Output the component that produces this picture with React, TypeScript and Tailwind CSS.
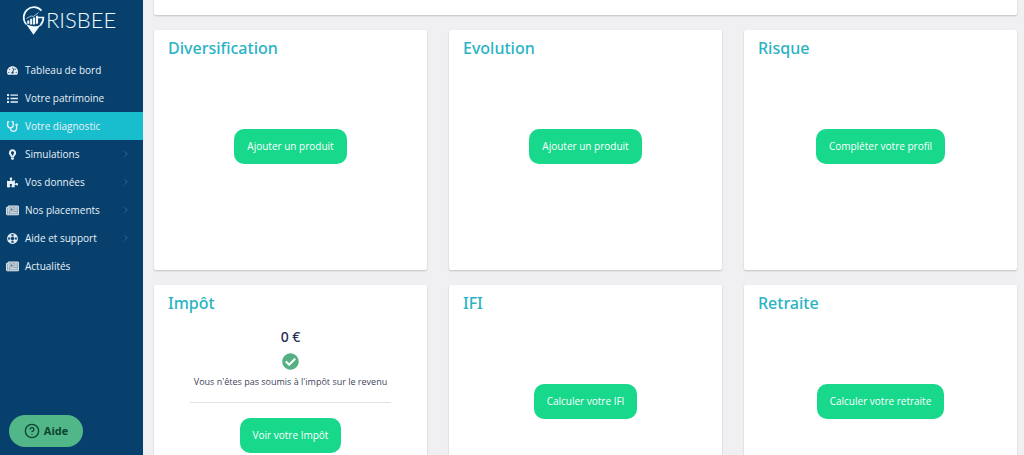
import type { ComponentType, ReactNode } from "react";
import { FaCheckCircle, FaList, FaPuzzlePiece, FaStethoscope, FaTachometerAlt } from "react-icons/fa";
import { ChevronRight, CircleHelp } from "lucide-react";

type IconProps = { className?: string };
type NavItem = {
  label: string;
  icon: ComponentType<IconProps>;
  active?: boolean;
  expandable?: boolean;
};

function BulbIcon({ className }: IconProps) {
  return (
    <svg viewBox="0 0 12 12" className={className} fill="currentColor" aria-hidden="true">
      <path
        fillRule="evenodd"
        d="M6 0.2a4 4 0 0 0-2.6 7c.6.5.8 1 .8 1.7h3.6c0-.7.2-1.2.8-1.7A4 4 0 0 0 6 .2ZM6 2.4a1.7 1.7 0 0 1 1.1 3L6.5 7h-1L4.9 5.4A1.7 1.7 0 0 1 6 2.4Z"
      />
      <path d="M4.4 9.4h3.2v1.4l-.8 1H5.2l-.8-1Z" />
    </svg>
  );
}

function NewspaperIcon() {
  return (
    <svg viewBox="0 0 13 11" className="h-[11px] w-[13px]" aria-hidden="true">
      <path d="M2.2 1H12.4V9.8H1.2A.8.8 0 0 1 .5 9V2.4H2.2Z" fill="#8fa7b8" stroke="#dfe5e8" strokeWidth="1" />
      <path d="M2.4 2V9" stroke="#dfe5e8" strokeWidth="0.8" />
      <path d="M4 3H7V6H4Z" fill="#4e6f88" stroke="#e9edef" strokeWidth="0.8" />
      <path d="M8.3 3H11M8.3 5.2H11M4 7.8H11" stroke="#e9edef" strokeWidth="0.9" />
    </svg>
  );
}

function LifeRingIcon({ className }: IconProps) {
  return (
    <svg viewBox="0 0 12 12" className={className} fill="none" stroke="currentColor" aria-hidden="true">
      <circle cx="6" cy="6" r="5.3" strokeWidth="1.2" />
      <circle cx="6" cy="6" r="2.4" strokeWidth="0.9" />
      <circle
        cx="6"
        cy="6"
        r="3.9"
        strokeWidth="2.8"
        pathLength="8"
        strokeDasharray="1.1 0.9"
        strokeDashoffset="-0.45"
      />
    </svg>
  );
}

const navItems: NavItem[] = [
  { label: "Tableau de bord", icon: FaTachometerAlt },
  { label: "Votre patrimoine", icon: FaList },
  { label: "Votre diagnostic", icon: FaStethoscope, active: true },
  { label: "Simulations", icon: BulbIcon, expandable: true },
  { label: "Vos données", icon: FaPuzzlePiece, expandable: true },
  { label: "Nos placements", icon: NewspaperIcon, expandable: true },
  { label: "Aide et support", icon: LifeRingIcon, expandable: true },
  { label: "Actualités", icon: NewspaperIcon },
];

function Logo() {
  return (
    <a href="#" aria-label="Grisbee" className="flex h-14 items-start pt-1.5 pl-[22px] text-[#eefaff]">
      <svg viewBox="0 0 24 30" className="h-[30px] w-6 shrink-0" fill="none" stroke="currentColor">
        <path d="M19.5 4.6A10 10 0 1 0 4.3 18.2" strokeWidth="1.7" />
        <path d="M15.8 11.5H21.4C21.4 15 20 17.5 18.2 19.6" strokeWidth="1.7" />
        <path d="M3.8 17.8C8.5 21 14.5 21 19 18.4L11.5 28.8Z" fill="currentColor" stroke="none" />
        <path d="M6.3 17.8V14.5M9.2 18.6V12.8M12.1 18.6V11.6M15 17.8V9.8" strokeWidth="2.1" />
        <path d="M4.5 12.5 9 10 11.5 10.4 16.5 6.6" strokeWidth="0.7" />
      </svg>
      <span className="font-['Lato',sans-serif] text-[22px] leading-7 font-light">RISBEE</span>
    </a>
  );
}

function Sidebar() {
  return (
    <aside className="sticky top-0 h-screen w-[143px] shrink-0 bg-[#07406d]">
      <Logo />
      <nav>
        <ul>
          {navItems.map(({ label, icon: Icon, active, expandable }) => (
            <li key={label}>
              <a
                href="#"
                aria-current={active ? "page" : undefined}
                className={`flex h-7 items-center pr-3 pl-1.5 text-[10px] text-[#e8f1f8] ${active ? "bg-[#18bdce]" : ""}`}
              >
                <span className="mr-1.5 flex w-[13px] justify-center">
                  <Icon className="size-[11px]" />
                </span>
                <span className="grow whitespace-nowrap">{label}</span>
                {expandable && <ChevronRight className="size-2.5 text-[#3c6e94]" strokeWidth={2} />}
              </a>
            </li>
          ))}
        </ul>
      </nav>
      <button
        type="button"
        className="absolute bottom-2 left-[9px] flex h-8 w-[74px] items-center justify-center gap-1 rounded-full bg-[#52b788] text-[11px] font-bold text-[#0d4430]"
      >
        <CircleHelp className="size-4" strokeWidth={2} />
        Aide
      </button>
    </aside>
  );
}

function ActionButton({ children }: { children: ReactNode }) {
  return (
    <button
      type="button"
      className="h-[35px] rounded-[10px] bg-[#18d88c] px-[13px] text-[10px] whitespace-nowrap text-white"
    >
      {children}
    </button>
  );
}

function Card({ title, children }: { title: string; children: ReactNode }) {
  return (
    <section className="flex h-60 flex-col rounded-xs bg-white px-3.5 pt-1.5 shadow-[0_1px_2px_rgba(0,0,0,0.2)]">
      <h2 className="font-['Noto_Sans',sans-serif] text-[16px] leading-6 font-medium text-[#29b3c5]">{title}</h2>
      {children}
    </section>
  );
}

function EmptyCard({ title, action }: { title: string; action: string }) {
  return (
    <Card title={title}>
      <div className="flex grow items-center justify-center pb-[38px]">
        <ActionButton>{action}</ActionButton>
      </div>
    </Card>
  );
}

export default function App() {
  return (
    <div className="flex min-h-screen bg-[#f0f0f2] font-['Open_Sans',sans-serif]">
      <Sidebar />
      <main className="flex grow flex-col gap-[15px] pr-[7px] pl-[11px]">
        <section className="h-[15px] rounded-b-xs bg-white shadow-[0_1px_2px_rgba(0,0,0,0.2)]" />
        <div className="grid grid-cols-3 gap-x-[22px] gap-y-[15px]">
          <EmptyCard title="Diversification" action="Ajouter un produit" />
          <EmptyCard title="Evolution" action="Ajouter un produit" />
          <EmptyCard title="Risque" action="Compléter votre profil" />
          <Card title="Impôt">
            <div className="flex flex-col items-center pt-3">
              <p className="font-['Noto_Sans',sans-serif] text-[14px] leading-5 font-medium text-[#262b57]">0 €</p>
              <FaCheckCircle className="mt-1.5 size-[17px] text-[#55b184]" />
              <p className="mt-1 text-[9px] leading-4 text-[#41455c]">
                Vous n'êtes pas soumis à l'impôt sur le revenu
              </p>
              <hr className="mt-3 mb-[15px] w-[82%] border-[#dfe1e6]" />
              <ActionButton>Voir votre Impôt</ActionButton>
            </div>
          </Card>
          <EmptyCard title="IFI" action="Calculer votre IFI" />
          <EmptyCard title="Retraite" action="Calculer votre retraite" />
        </div>
      </main>
    </div>
  );
}
